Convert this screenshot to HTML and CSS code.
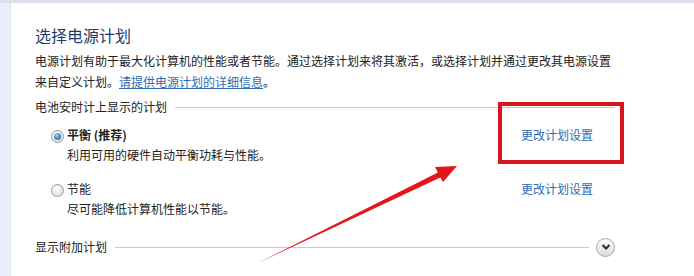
FILE: index.html
```html
<!DOCTYPE html>
<html lang="zh-CN">
<head>
  <meta charset="UTF-8">
  <title>电源选项</title>
  <link rel="stylesheet" href="styles.css">
</head>
<body>
  <div class="frame">
    <aside class="side"></aside>

    <main class="content">
      <h1>选择电源计划</h1>
      <p class="intro">电源计划有助于最大化计算机的性能或者节能。通过选择计划来将其激活，或选择计划并通过更改其电源设置<br>来自定义计划。<a href="#">请提供电源计划的详细信息</a>。</p>

      <div class="group-head">
        <span>电池安时计上显示的计划</span>
        <div class="rule"></div>
      </div>

      <!-- Plans -->
      <div class="plan">
        <label class="plan-info">
          <span class="radio on"></span>
          <span class="plan-text">
            <b>平衡 (推荐)</b>
            <span class="plan-desc">利用可用的硬件自动平衡功耗与性能。</span>
          </span>
        </label>
        <a class="plan-link" href="#">更改计划设置</a>
      </div>

      <div class="plan second">
        <label class="plan-info">
          <span class="radio"></span>
          <span class="plan-text">
            <span>节能</span>
            <span class="plan-desc">尽可能降低计算机性能以节能。</span>
          </span>
        </label>
        <a class="plan-link" href="#">更改计划设置</a>
      </div>

      <div class="group-head more">
        <span>显示附加计划</span>
        <div class="rule"></div>
        <button class="chev">
          <svg width="10" height="8" viewBox="0 0 10 8"><path d="M1.5 2 L5 5.5 L8.5 2" fill="none" stroke="#2b2b2b" stroke-width="2"/></svg>
        </button>
      </div>
    </main>

    <!-- annotation -->
    <div class="callout"></div>
    <svg class="arrow" width="694" height="276" viewBox="0 0 694 276">
      <polygon points="258,263 437.9,172.6 435,167 457,166 443,182 440.3,177.4" fill="#e3161b"/>
    </svg>
  </div>
</body>
</html>
```

FILE: styles.css
```css
* {
  margin: 0;
  padding: 0;
  box-sizing: border-box;
}

body {
  font-family: "Noto Sans CJK SC", "Liberation Sans", sans-serif;
  font-size: 12px;
  color: #222;
  background: #fff;
  width: 694px;
  height: 276px;
  overflow: hidden;
}

.frame {
  position: relative;
  display: flex;
  height: 276px;
  border-top: 3px solid #dbe1ea;
}

.side {
  width: 11px;
  background: #e9f0f9;
  border-right: 1px solid #e2e8f0;
}

.content {
  padding: 21px 0 0 24px;
  width: 604px;
}

h1 {
  font-size: 16px;
  font-weight: normal;
  line-height: 22px;
  color: #1f3b6b;
}

.intro {
  margin-top: 4px;
  line-height: 21px;
}

.intro a {
  color: #2e6db3;
  text-decoration: underline;
}

.group-head {
  display: flex;
  align-items: center;
  gap: 8px;
  margin-top: 5px;
  height: 20px;
  line-height: 20px;
}

.group-head .rule {
  flex: 1;
  height: 1px;
  background: #c9c9c9;
}

.group-head.more {
  margin-top: 18px;
  gap: 8px;
}

.group-head.more .rule {
  flex: 0 0 474px;
}

.chev {
  width: 19px;
  height: 19px;
  border-radius: 50%;
  border: 1px solid #a9a9a9;
  background: linear-gradient(#fdfdfd, #dcdcdc);
  display: flex;
  align-items: center;
  justify-content: center;
  margin-left: -1px;
}

.plan {
  display: flex;
  padding-left: 16px;
  margin-top: 8px;
  line-height: 20px;
}

.plan.second {
  margin-top: 14px;
}

.plan-info {
  display: flex;
  width: 470px;
  gap: 3px;
}

.plan-text {
  display: flex;
  flex-direction: column;
}

.plan-text b {
  font-weight: bold;
}

.plan-link {
  color: #2e6db3;
  text-decoration: none;
}

.radio {
  width: 13px;
  height: 13px;
  margin-top: 5px;
  border-radius: 50%;
  border: 1px solid #9a9a9a;
  background: radial-gradient(circle at 40% 35%, #ffffff, #d6d6d6);
  position: relative;
}

.radio.on::after {
  content: "";
  position: absolute;
  left: 2px;
  top: 2px;
  width: 7px;
  height: 7px;
  border-radius: 50%;
  background: radial-gradient(circle at 40% 35%, #9fd3f5, #2a6fb8 70%, #1c4f8c);
}

.callout {
  position: absolute;
  left: 498px;
  top: 99px;
  width: 126px;
  height: 62px;
  border: 4px solid #d8151c;
}

.arrow {
  position: absolute;
  left: 0;
  top: -3px;
}
```
